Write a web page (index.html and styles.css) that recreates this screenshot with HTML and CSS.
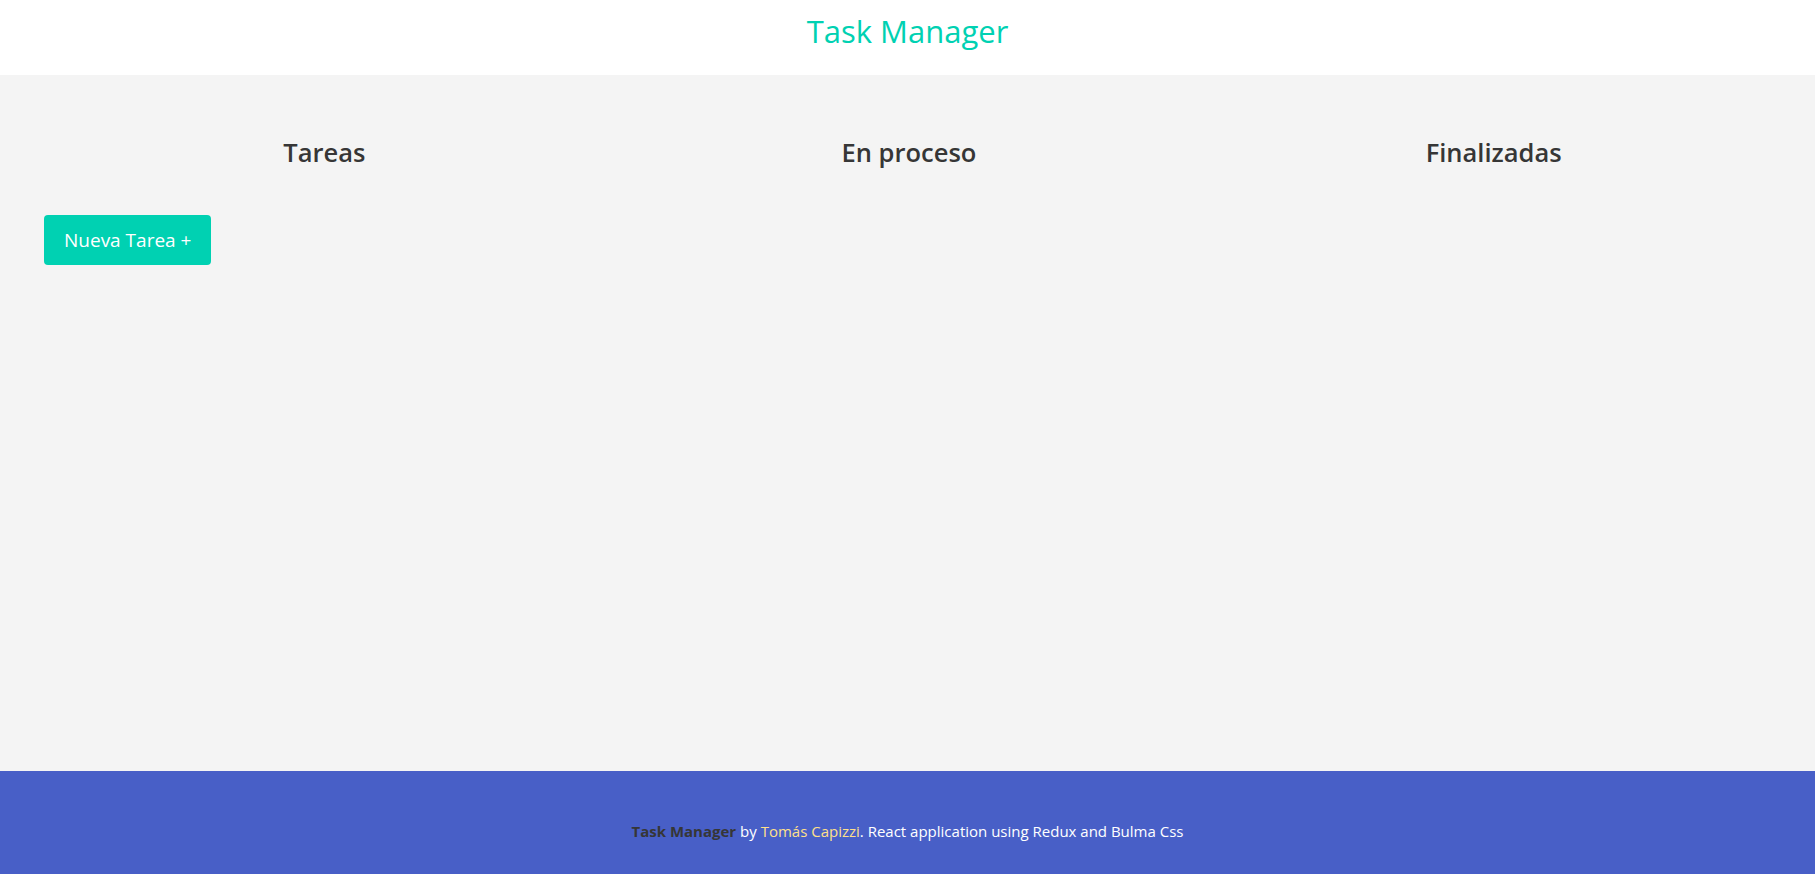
FILE: index.html
```html
<!DOCTYPE html>
<html lang="es">
<head>
<meta charset="utf-8">
<title>Task Manager</title>
<link rel="stylesheet" href="styles.css">
</head>
<body>
<header class="topbar">
  <h1 class="brand">Task Manager</h1>
</header>
<main class="board">
  <section class="col">
    <h2 class="col-title">Tareas</h2>
    <button class="btn-new">Nueva Tarea +</button>
  </section>
  <section class="col">
    <h2 class="col-title">En proceso</h2>
  </section>
  <section class="col">
    <h2 class="col-title">Finalizadas</h2>
  </section>
</main>
<footer class="footer">
  <p><strong class="f-brand">Task Manager</strong> by <a class="f-author">Tomás Capizzi</a>. React application using Redux and Bulma Css</p>
</footer>
</body>
</html>
```
FILE: styles.css
```css
* { box-sizing: border-box; }
html, body { margin: 0; padding: 0; }
body {
  background: #f4f4f4;
  font-family: "Open Sans", "Noto Sans", sans-serif;
  color: #4a4a4a;
}
.topbar {
  background: #fff;
  height: 75px;
  display: flex;
  justify-content: center;
  align-items: flex-start;
}
.brand {
  margin: 0;
  padding-top: 11px;
  font-size: 31px;
  line-height: 40px;
  font-weight: 500;
  color: #00d1b2;
}
.board {
  min-height: 696px;
  display: grid;
  grid-template-columns: repeat(3, 1fr);
  align-items: start;
  padding: 61px 29px 0 32px;
}
.col {
  padding: 0 12px;
  display: flex;
  flex-direction: column;
  align-items: flex-start;
}
.col-title {
  align-self: stretch;
  text-align: center;
  margin: 0 0 47px;
  font-size: 25.5px;
  line-height: 32px;
  font-weight: 600;
  color: #363636;
}
.btn-new {
  height: 50px;
  padding: 0 20px;
  border: 0;
  border-radius: 4px;
  background: #00d1b2;
  color: #fff;
  font-family: inherit;
  font-size: 19px;
  cursor: pointer;
}
.footer {
  background: #485fc7;
  padding: 48px 24px 96px;
  text-align: center;
  color: #fff;
  font-size: 15px;
}
.footer p { margin: 0; line-height: 24px; }
.f-brand { color: #363636; font-weight: 700; }
.f-author { color: #ffe08a; }
```
